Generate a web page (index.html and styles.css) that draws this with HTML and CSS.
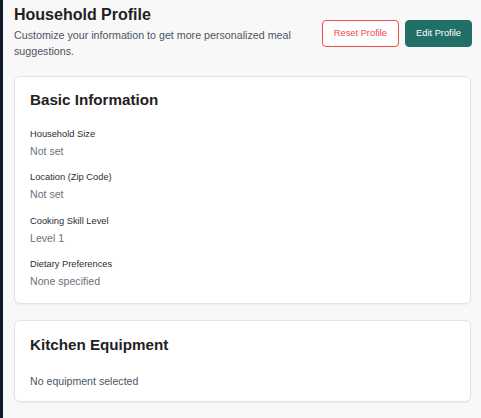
FILE: index.html
```html
<!DOCTYPE html>
<html lang="en">
<head>
<meta charset="utf-8">
<title>Household Profile</title>
<link rel="stylesheet" href="styles.css">
</head>
<body>
<div class="app">
  <div class="rail"></div>
  <main class="main">
    <header class="page-header">
      <div class="intro">
        <h1 class="page-title">Household Profile</h1>
        <p class="page-subtitle">Customize your information to get more personalized meal suggestions.</p>
      </div>
      <div class="actions">
        <button class="btn btn-reset" type="button">Reset Profile</button>
        <button class="btn btn-edit" type="button">Edit Profile</button>
      </div>
    </header>

    <section class="card">
      <h2 class="card-title">Basic Information</h2>
      <div class="fields">
        <div class="field">
          <div class="field-label">Household Size</div>
          <div class="field-value">Not set</div>
        </div>
        <div class="field">
          <div class="field-label">Location (Zip Code)</div>
          <div class="field-value">Not set</div>
        </div>
        <div class="field">
          <div class="field-label">Cooking Skill Level</div>
          <div class="field-value">Level 1</div>
        </div>
        <div class="field">
          <div class="field-label">Dietary Preferences</div>
          <div class="field-value">None specified</div>
        </div>
      </div>
    </section>

    <section class="card card-kitchen">
      <h2 class="card-title">Kitchen Equipment</h2>
      <p class="empty-text">No equipment selected</p>
    </section>
  </main>
</div>
</body>
</html>
```
FILE: styles.css
```css
* { box-sizing: border-box; }

html, body {
  margin: 0;
  padding: 0;
  height: 100%;
}

body {
  font-family: "Liberation Sans", Arial, Helvetica, sans-serif;
  background: #f8f8f8;
  color: #1f2227;
  overflow: hidden;
}

.app {
  display: flex;
  min-height: 100%;
}

.rail {
  width: 3px;
  flex: 0 0 3px;
  background: #0f1828;
}

.main {
  flex: 1;
  padding: 5px 9px 0 11px;
  display: flex;
  flex-direction: column;
}

.page-header {
  display: flex;
  align-items: center;
  justify-content: space-between;
}

.intro {
  max-width: 300px;
}

.page-title {
  margin: 0;
  font-size: 16px;
  line-height: 20px;
  font-weight: 700;
  color: #1f2124;
}

.page-subtitle {
  margin: 2px 0 0;
  font-size: 10.7px;
  line-height: 16px;
  color: #4d5561;
}

.actions {
  display: flex;
  gap: 6px;
  margin-top: 2px;
}

.btn {
  font-family: inherit;
  font-size: 9.3px;
  line-height: 13px;
  padding: 6px 11px;
  border-radius: 4px;
  border: 1px solid transparent;
  cursor: pointer;
}

.btn-reset {
  background: #ffffff;
  border-color: #ef4a4a;
  color: #ef4a4a;
}

.btn-edit {
  background: #216f67;
  border-color: #216f67;
  color: #ffffff;
  padding: 6px 10px;
}

.card {
  background: #ffffff;
  border: 1px solid #e3e3e3;
  border-radius: 6px;
  box-shadow: 0 1px 2px rgba(0, 0, 0, 0.05);
  padding: 12px 15px 14px;
  margin-right: 1px;
}

.page-header + .card {
  margin-top: 17px;
}

.card + .card {
  margin-top: 16px;
}

.card-title {
  margin: 0;
  font-size: 15.2px;
  line-height: 22px;
  font-weight: 700;
  color: #1f2124;
}

.fields {
  margin-top: 16px;
  display: flex;
  flex-direction: column;
  gap: 11.3px;
}

.field-label {
  font-size: 9.3px;
  line-height: 14px;
  color: #2a2d33;
  margin-bottom: 2px;
}

.field-value {
  font-size: 10.6px;
  line-height: 16px;
  color: #6b717b;
}

.card-kitchen {
  padding-top: 13px;
  padding-bottom: 12px;
}

.empty-text {
  margin: 17px 0 0;
  font-size: 10.6px;
  line-height: 16px;
  color: #4d5561;
}
```
